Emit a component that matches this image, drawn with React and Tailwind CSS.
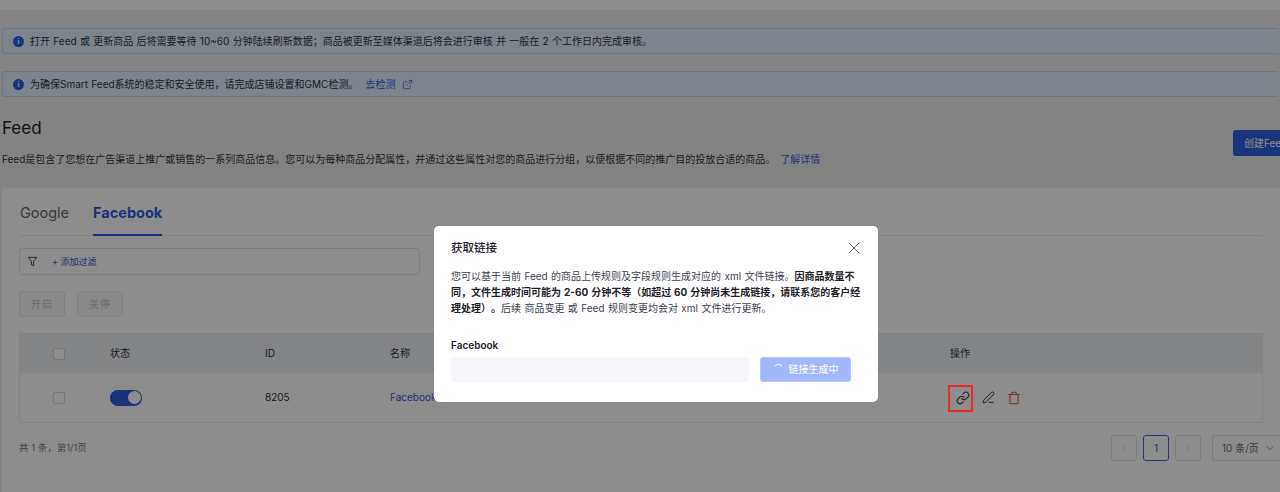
import { ChevronDown, ChevronLeft, ChevronRight, ExternalLink, Link, PenLine, Trash, X } from 'lucide-react';

const font = 'font-["Inter","Noto_Sans_CJK_SC",sans-serif]';

function InfoDot() {
  return (
    <span className="flex h-[11px] w-[11px] shrink-0 items-center justify-center rounded-full bg-[#2f5fe0] text-[7px] font-bold leading-none text-white">
      i
    </span>
  );
}

function Alert({ children }) {
  return (
    <div className="flex h-[26px] items-center gap-[6px] rounded-l-[3px] border border-r-0 border-[#c4d5f5] bg-[#e6f0ff] pl-[10px] text-[10px] text-[#333844] [word-spacing:0.5px]">
      <InfoDot />
      {children}
    </div>
  );
}

function Check() {
  return <span className="block h-3 w-3 rounded-[2px] border border-[#d5d7dc] bg-white" />;
}

function PageBtn({ children, active }) {
  return (
    <span className={`flex h-[26px] w-[26px] items-center justify-center rounded-[3px] border text-[10px] ${active ? 'border-[#3b63d6] text-[#3b63d6]' : 'border-[#dfe1e6] text-[#b5b8bf]'}`}>
      {children}
    </span>
  );
}

export default function App() {
  return (
    <div className={`relative h-[492px] w-[1280px] overflow-hidden bg-[#eeeeee] ${font}`}>
      <div className="h-[10px] bg-white" />

      <div className="px-[2px] pt-[18px]">
        <Alert>打开 Feed 或 更新商品 后将需要等待 10~60 分钟陆续刷新数据；商品被更新至媒体渠道后将会进行审核 并 一般在 2 个工作日内完成审核。</Alert>
        <div className="mt-[17px]">
          <Alert>
            为确保Smart Feed系统的稳定和安全使用，请完成店铺设置和GMC检测。
            <span className="ml-[1px] text-[#3b63d6]">去检测</span>
            <ExternalLink className="ml-[1px] h-[11px] w-[11px] text-[#3b63d6]" strokeWidth={1.5} />
          </Alert>
        </div>

        <div className="mt-[19px] flex h-[72px] justify-between">
          <div>
            <h1 className="text-[17px] leading-[24px] text-[#1f2329]">Feed</h1>
            <p className="mt-[11px] text-[10px] leading-[16px] text-[#333844] [word-spacing:0.5px]">
              Feed是包含了您想在广告渠道上推广或销售的一系列商品信息。您可以为每种商品分配属性，并通过这些属性对您的商品进行分组，以便根据不同的推广目的投放合适的商品。
              <span className="ml-[5px] text-[#3b63d6]">了解详情</span>
            </p>
          </div>
          <button className="mr-[-60px] mt-[14px] h-[26px] w-[105px] rounded-[3px] bg-[#2f5fe0] pl-[11px] text-left text-[10px] text-white">
            创建Feed
          </button>
        </div>
      </div>

      <div className="ml-[2px] h-[304px] rounded-t-[4px] bg-white px-[17px]">
        <div className="flex h-[48px] items-start gap-[24px] border-b border-[#ececec] pl-[1px] pt-[16px] text-[14.5px] leading-[18px]">
          <span className="text-[#6a6f7a]">Google</span>
          <span className="-mb-px h-[32px] border-b-2 border-[#2f5fe0] font-bold text-[#2f5fe0]">Facebook</span>
        </div>

        <div className="mt-[12px] flex h-[27px] w-[401px] items-center rounded-[3px] border border-[#e2e4e8] pl-[7px] text-[9px] text-[#3b63d6]">
          <svg viewBox="0 0 12 12" className="h-[11px] w-[11px] text-[#3c4250]" fill="none" stroke="currentColor" strokeWidth="1">
            <path d="M1.5 1.5h9L7.2 5.5v5L4.8 9.5v-4z" strokeLinejoin="round" />
          </svg>
          <span className="ml-[14px]">+ 添加过滤</span>
        </div>

        <div className="mt-[16px] flex gap-[12px]">
          <span className="flex h-[26px] w-[46px] items-center justify-center rounded-[3px] border border-[#e8e9ec] bg-[#f7f8f9] text-[10px] tracking-[1px] text-[#c5c7cc]">开启</span>
          <span className="flex h-[26px] w-[46px] items-center justify-center rounded-[3px] border border-[#e8e9ec] bg-[#f7f8f9] text-[10px] tracking-[1px] text-[#c5c7cc]">关停</span>
        </div>

        <div className="mt-[16px] border border-[#ececec] text-[10px] text-[#333844]">
          <div className="grid h-[39px] grid-cols-[90px_155px_125px_560px_1fr] items-center bg-[#eef0f3]">
            <span className="pl-[33px]"><Check /></span>
            <span>状态</span>
            <span>ID</span>
            <span>名称</span>
            <span>操作</span>
          </div>
          <div className="grid h-[49px] grid-cols-[90px_155px_125px_560px_1fr] items-center">
            <span className="pl-[33px]"><Check /></span>
            <span className="flex h-4 w-8 items-center justify-end rounded-full bg-[#2f5fe0] pr-[1px]">
              <span className="h-[13px] w-[13px] rounded-full bg-white" />
            </span>
            <span>8205</span>
            <span className="text-[#3b63d6]">Facebook</span>
            <span className="flex items-center gap-[12px] text-[#333844]">
              <Link className="ml-[6px] h-[14px] w-[14px]" strokeWidth={1.75} />
              <PenLine className="h-[13px] w-[13px]" strokeWidth={1.75} />
              <Trash className="h-[14px] w-[14px] text-[#d9593a]" strokeWidth={1.75} />
            </span>
          </div>
        </div>

        <div className="mt-[12px] flex h-[26px] items-center justify-between">
          <span className="text-[9.5px] text-[#7b7f88]">共 1 条，第1/1页</span>
          <div className="mr-[-76px] flex items-center gap-[6px]">
            <PageBtn><ChevronLeft className="h-3 w-3" strokeWidth={1.5} /></PageBtn>
            <PageBtn active>1</PageBtn>
            <PageBtn><ChevronRight className="h-3 w-3" strokeWidth={1.5} /></PageBtn>
            <span className="ml-[5px] flex h-[26px] w-[127px] items-center gap-[5px] rounded-[3px] border border-[#dfe1e6] pl-[9px] text-[10px] text-[#6a6f7a]">
              10 条/页
              <ChevronDown className="h-3 w-3" strokeWidth={1.5} />
            </span>
          </div>
        </div>
      </div>

      {/* modal */}
      <div className="absolute inset-0 bg-black/45 pl-[434px] pt-[226px]">
        <div className="h-[176px] w-[444px] rounded-[5px] bg-white px-[17px] pt-[12px]">
          <div className="flex items-center justify-between">
            <h2 className="text-[11.5px] font-medium leading-[16px] text-[#1f2329]">获取链接</h2>
            <X className="mr-[-3px] h-[20px] w-[20px] text-[#3c4250]" strokeWidth={1} />
          </div>
          <p className="mt-[10px] w-[412px] text-[10px] leading-[16px] text-[#3c4250] [text-spacing-trim:space-all] [word-spacing:0.6px]">
            您可以基于当前 Feed 的商品上传规则及字段规则生成对应的 xml 文件链接。
            <b className="font-bold text-[#1f2329]">因商品数量不同，文件生成时间可能为 2-60 分钟不等（如超过 60 分钟尚未生成链接，请联系您的客户经理处理）。</b>
            后续 商品变更 或 Feed 规则变更均会对 xml 文件进行更新。
          </p>
          <div className="mt-[22px] text-[10px] font-semibold leading-[14px] text-[#1f2329]">Facebook</div>
          <div className="mt-[5px] flex items-center gap-[11px]">
            <div className="h-[25px] w-[298px] rounded-[3px] bg-[#f6f7fb]" />
            <button className="flex h-[25px] w-[91px] items-center justify-center gap-[5px] rounded-[3px] border border-[#b3c5fb] bg-[#a1b8fb] text-[10px] text-white">
              <span className="h-[11px] w-[11px] rounded-full border border-transparent border-t-white" />
              链接生成中
            </button>
          </div>
        </div>
      </div>

      {/* red annotation on the screenshot */}
      <div className="absolute left-[948px] top-[385px] h-[27px] w-[25px] border-2 border-[#ee2b2b]" />
    </div>
  );
}
